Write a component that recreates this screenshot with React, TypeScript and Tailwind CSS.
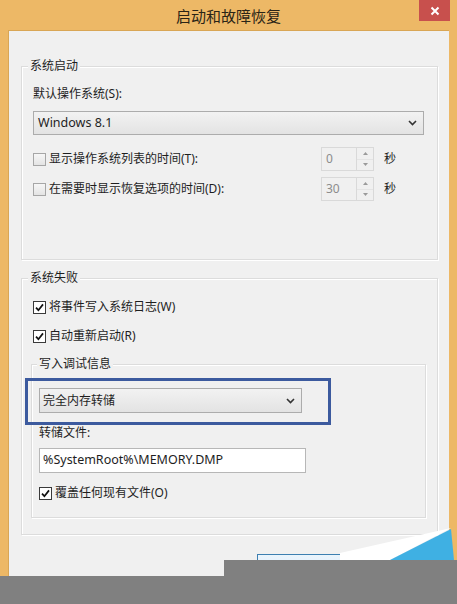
import React from 'react';

const font = "font-['Noto_Sans','Noto_Sans_CJK_SC',sans-serif]";

function CheckBox({ checked }: { checked?: boolean }) {
  return (
    <span
      className={
        checked
          ? 'flex h-[13px] w-[13px] shrink-0 items-center justify-center border border-[#3a3a3a] bg-white'
          : 'flex h-[13px] w-[13px] shrink-0 items-center justify-center border border-[#a6a6a6] bg-gradient-to-b from-[#f6f6f6] to-[#e4e4e4]'
      }
    >
      {checked && (
        <svg width="9" height="9" viewBox="0 0 9 9">
          <path d="M1 4.6 L3.4 7.2 L8 1.4" fill="none" stroke="#111" strokeWidth="1.7" />
        </svg>
      )}
    </span>
  );
}

function Chevron() {
  return (
    <svg width="9" height="6" viewBox="0 0 9 6">
      <path d="M1 1 L4.5 4.5 L8 1" fill="none" stroke="#333" strokeWidth="1.6" />
    </svg>
  );
}

function Spin({ value }: { value: string }) {
  return (
    <div className="flex h-[24px] w-[53px] border border-[#d9d9d9] bg-[#f0f0f0]">
      <span className="flex-1 pl-[4px] text-[12px] leading-[22px] text-[#8c8c8c]">{value}</span>
      <div className="flex w-[17px] flex-col border-l border-[#d9d9d9]">
        <span className="flex flex-1 items-center justify-center">
          <svg width="5" height="3" viewBox="0 0 5 3"><path d="M0 3 L2.5 0 L5 3Z" fill="#9a9a9a" /></svg>
        </span>
        <span className="flex flex-1 items-center justify-center border-t border-[#e4e4e4]">
          <svg width="5" height="3" viewBox="0 0 5 3"><path d="M0 0 L2.5 3 L5 0Z" fill="#9a9a9a" /></svg>
        </span>
      </div>
    </div>
  );
}

function Legend({ text, left }: { text: string; left: string }) {
  return (
    <span className={`absolute top-[-9px] ${left} bg-[#f0f0f0] px-[2px] text-[12px] leading-[16px] text-[#1e1e1e]`}>
      {text}
    </span>
  );
}

export default function App() {
  return (
    <div className={`relative h-[604px] w-[457px] overflow-hidden bg-[#edb866] ${font} text-[#1e1e1e]`}>
      {/* Title bar */}
      <div className="relative flex h-[30px] items-center justify-center pt-[2px] text-[15px] text-[#2a2416]">
        启动和故障恢复
        <span className="absolute right-[7px] top-0 flex h-[21px] w-[31px] items-center justify-center bg-[#c8504d]">
          <svg width="10" height="10" viewBox="0 0 10 10">
            <path d="M1.5 1.5 L8.5 8.5 M8.5 1.5 L1.5 8.5" stroke="#fff" strokeWidth="2" />
          </svg>
        </span>
      </div>

      <div className="mx-[8px] h-[574px] border-l border-t border-[#d9a655] bg-[#f0f0f0]">
        {/* 系统启动 */}
        <div className="relative ml-[12px] mt-[35px] h-[194px] w-[417px] border border-[#dcdcdc] shadow-[inset_1px_1px_0_#fff,1px_1px_0_#fff]">
          <Legend text="系统启动" left="left-[6px]" />
          <div className="pl-[11px]">
            <div className="mt-[19px] h-[16px] text-[12px] leading-[16px]">默认操作系统(S):</div>
            <div className="mt-[9px] flex h-[24px] w-[391px] items-center justify-between border border-[#acacac] bg-gradient-to-b from-[#f2f2f2] to-[#e3e3e3] pl-[4px] pr-[6px] text-[12.5px]">
              <span>Windows 8.1</span>
              <Chevron />
            </div>
            <div className="mt-[12px] flex h-[24px] items-center">
              <CheckBox />
              <span className="ml-[3px] w-[272px] text-[12px] leading-[16px]">显示操作系统列表的时间(T):</span>
              <Spin value="0" />
              <span className="ml-[10px] text-[12px]">秒</span>
            </div>
            <div className="mt-[6px] flex h-[24px] items-center">
              <CheckBox />
              <span className="ml-[3px] w-[272px] text-[12px] leading-[16px]">在需要时显示恢复选项的时间(D):</span>
              <Spin value="30" />
              <span className="ml-[10px] text-[12px]">秒</span>
            </div>
          </div>
        </div>

        {/* 系统失败 */}
        <div className="relative ml-[12px] mt-[18px] h-[257px] w-[417px] border border-[#dcdcdc] shadow-[inset_1px_1px_0_#fff,1px_1px_0_#fff]">
          <Legend text="系统失败" left="left-[6px]" />
          <div className="pl-[11px]">
            <div className="mt-[20px] flex h-[16px] items-center gap-[3px] text-[12px]">
              <CheckBox checked />
              <span>将事件写入系统日志(W)</span>
            </div>
            <div className="mt-[13px] flex h-[16px] items-center gap-[3px] text-[12px]">
              <CheckBox checked />
              <span>自动重新启动(R)</span>
            </div>
          </div>

          {/* 写入调试信息 */}
          <div className="relative ml-[9px] mt-[20px] h-[154px] w-[395px] border border-[#dcdcdc] shadow-[inset_1px_1px_0_#fff,1px_1px_0_#fff]">
            <Legend text="写入调试信息" left="left-[5px]" />
            <div className="pl-[7px]">
              <div className="relative mt-[23px] flex h-[25px] w-[263px] items-center justify-between border border-[#acacac] bg-gradient-to-b from-[#f2f2f2] to-[#e3e3e3] pl-[3px] pr-[6px] text-[12px]">
                <span>完全内存转储</span>
                <Chevron />
                <span className="absolute left-[-15px] top-[-11px] h-[47px] w-[306px] border-[3px] border-[#3c5a9e]" />
              </div>
              <div className="mt-[12px] h-[16px] text-[12px] leading-[16px]">转储文件:</div>
              <div className="mt-[7px] flex h-[25px] w-[267px] items-center border border-[#b7b7b7] bg-white pl-[3px] text-[12.5px]">
                %SystemRoot%\MEMORY.DMP
              </div>
              <div className="mt-[12px] flex h-[16px] items-center gap-[3px] text-[12px]">
                <CheckBox checked />
                <span>覆盖任何现有文件(O)</span>
              </div>
            </div>
          </div>
        </div>

        {/* partially visible button */}
        <div className="ml-[248px] mt-[19px] h-[20px] w-[120px] border border-[#3c7fb1] bg-gradient-to-b from-[#eaf4fc] to-[#dcecfc]" />
      </div>

      {/* corner decoration */}
      <svg className="absolute left-[330px] top-[524px]" width="127" height="40" viewBox="0 0 127 40">
        <polygon points="10,29 121,4 60,36 10,36" fill="#ffffff" />
        <polygon points="60,36 121,5 124,36" fill="#3fb0e3" />
      </svg>

      {/* gray masks */}
      <div className="absolute left-[224px] top-[560px] h-[44px] w-[233px] bg-[#808080]" />
      <div className="absolute left-0 top-[576px] h-[28px] w-[224px] bg-[#808080]" />
    </div>
  );
}
